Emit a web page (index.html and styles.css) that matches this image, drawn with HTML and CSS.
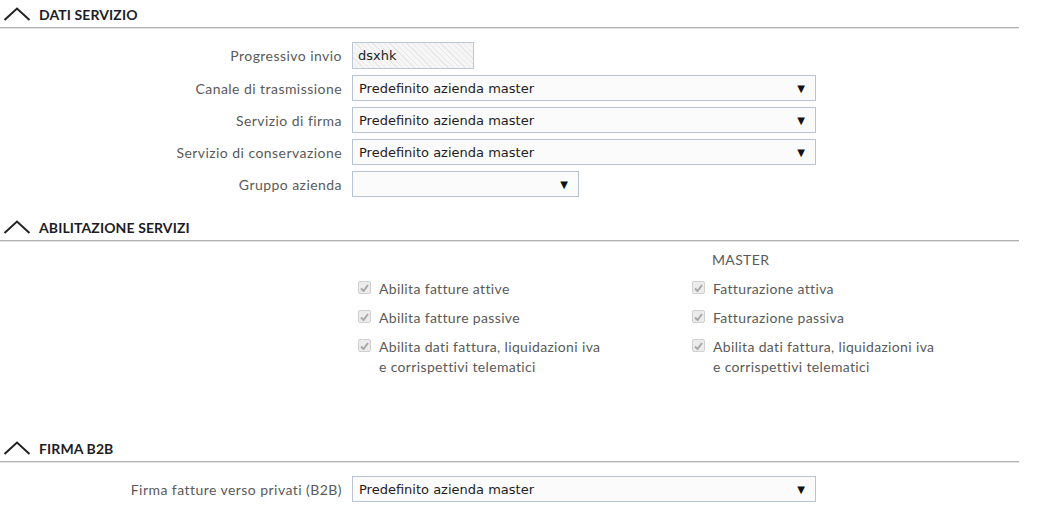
FILE: index.html
```html
<!DOCTYPE html>
<html lang="it">
<head>
<meta charset="utf-8">
<title>Dati servizio</title>
<link rel="stylesheet" href="styles.css">
</head>
<body>
<div class="page">
  <div class="section-head">
    <svg class="chev" width="28" height="14" viewBox="0 0 28 14"><polyline points="1.5,13 14,1.5 26.5,13" fill="none" stroke="#222" stroke-width="2"/></svg>
    <span class="title">DATI SERVIZIO</span>
  </div>
  <div class="form form-dati">
    <label class="lbl">Progressivo invio</label>
    <div class="ctl"><div class="input ro">dsxhk</div></div>
    <label class="lbl">Canale di trasmissione</label>
    <div class="ctl"><div class="select wide"><span>Predefinito azienda master</span><span class="arrow">▼</span></div></div>
    <label class="lbl">Servizio di firma</label>
    <div class="ctl"><div class="select wide"><span>Predefinito azienda master</span><span class="arrow">▼</span></div></div>
    <label class="lbl">Servizio di conservazione</label>
    <div class="ctl"><div class="select wide"><span>Predefinito azienda master</span><span class="arrow">▼</span></div></div>
    <label class="lbl">Gruppo azienda</label>
    <div class="ctl"><div class="select narrow"><span></span><span class="arrow">▼</span></div></div>
  </div>

  <div class="section-head sec2">
    <svg class="chev" width="28" height="14" viewBox="0 0 28 14"><polyline points="1.5,13 14,1.5 26.5,13" fill="none" stroke="#222" stroke-width="2"/></svg>
    <span class="title">ABILITAZIONE SERVIZI</span>
  </div>
  <div class="services">
    <div></div>
    <div class="master">MASTER</div>
    <div class="chk"><span class="box"><svg width="9" height="8" viewBox="0 0 9 8"><polyline points="1,4.5 3.5,7 8,1" fill="none" stroke="#a8a8a8" stroke-width="2"/></svg></span><span class="txt">Abilita fatture attive</span></div>
    <div class="chk"><span class="box"><svg width="9" height="8" viewBox="0 0 9 8"><polyline points="1,4.5 3.5,7 8,1" fill="none" stroke="#a8a8a8" stroke-width="2"/></svg></span><span class="txt">Fatturazione attiva</span></div>
    <div class="chk"><span class="box"><svg width="9" height="8" viewBox="0 0 9 8"><polyline points="1,4.5 3.5,7 8,1" fill="none" stroke="#a8a8a8" stroke-width="2"/></svg></span><span class="txt">Abilita fatture passive</span></div>
    <div class="chk"><span class="box"><svg width="9" height="8" viewBox="0 0 9 8"><polyline points="1,4.5 3.5,7 8,1" fill="none" stroke="#a8a8a8" stroke-width="2"/></svg></span><span class="txt">Fatturazione passiva</span></div>
    <div class="chk"><span class="box"><svg width="9" height="8" viewBox="0 0 9 8"><polyline points="1,4.5 3.5,7 8,1" fill="none" stroke="#a8a8a8" stroke-width="2"/></svg></span><span class="txt">Abilita dati fattura, liquidazioni iva<br>e corrispettivi telematici</span></div>
    <div class="chk"><span class="box"><svg width="9" height="8" viewBox="0 0 9 8"><polyline points="1,4.5 3.5,7 8,1" fill="none" stroke="#a8a8a8" stroke-width="2"/></svg></span><span class="txt">Abilita dati fattura, liquidazioni iva<br>e corrispettivi telematici</span></div>
  </div>

  <div class="section-head sec3">
    <svg class="chev" width="28" height="14" viewBox="0 0 28 14"><polyline points="1.5,13 14,1.5 26.5,13" fill="none" stroke="#222" stroke-width="2"/></svg>
    <span class="title">FIRMA B2B</span>
  </div>
  <div class="form form-b2b">
    <label class="lbl">Firma fatture verso privati (B2B)</label>
    <div class="ctl"><div class="select wide"><span>Predefinito azienda master</span><span class="arrow">▼</span></div></div>
  </div>
</div>
</body>
</html>
```

FILE: styles.css
```css
html, body {
  margin: 0;
  padding: 0;
  background: #ffffff;
}
body {
  font-family: "Lato", "Open Sans", sans-serif;
  color: #5a5a5a;
}
.page {
  width: 1019px;
  padding-top: 1px;
}
.section-head {
  height: 26px;
  display: flex;
  align-items: center;
  gap: 8px;
  padding-left: 3px;
  border-bottom: 1px solid #b0b0b0;
  box-shadow: 0 1px 0 #e4e4e4;
}
.chev {
  display: block;
  margin-top: -1px;
}
.title {
  font-family: "Lato", sans-serif;
  font-weight: 700;
  font-size: 14px;
  color: #1d1d26;
  letter-spacing: 0.1px;
}
.form {
  display: grid;
  grid-template-columns: 342px auto;
  column-gap: 10px;
  row-gap: 6px;
  align-items: center;
}
.form-dati {
  margin-top: 14px;
}
.form-b2b {
  margin-top: 14px;
}
.lbl {
  text-align: right;
  font-size: 14px;
  letter-spacing: 0.45px;
  color: #5a5a5a;
}
.ctl {
  display: flex;
}
.input {
  box-sizing: border-box;
  width: 122px;
  height: 27px;
  border: 1px solid #bcc6d4;
  font-family: "DejaVu Sans", Verdana, sans-serif;
  font-size: 13px;
  color: #222;
  padding-left: 5px;
  line-height: 25px;
}
.input.ro {
  background: repeating-linear-gradient(45deg, #f6f6f6 0px, #f6f6f6 3px, #e8e8e8 3px, #e8e8e8 4px);
}
.select {
  box-sizing: border-box;
  height: 26px;
  border: 1px solid #b8c4d4;
  background: #fbfbfb;
  display: flex;
  align-items: center;
  justify-content: space-between;
  padding: 0 10px 0 6px;
  font-family: "DejaVu Sans", Verdana, sans-serif;
  font-size: 13px;
  color: #241c1c;
}
.select.wide {
  width: 464px;
}
.select.narrow {
  width: 227px;
}
.arrow {
  font-size: 10px;
  color: #111;
}
.sec2 {
  margin-top: 17px;
}
.services {
  display: grid;
  grid-template-columns: 334px auto;
  margin-left: 358px;
  margin-top: 9px;
  row-gap: 9px;
  font-size: 14px;
  letter-spacing: 0.35px;
  color: #5a5a5a;
}
.master {
  padding-left: 20px;
  line-height: 20px;
}
.chk {
  display: flex;
  align-items: flex-start;
  gap: 8px;
  line-height: 20px;
}
.box {
  box-sizing: border-box;
  width: 13px;
  height: 13px;
  margin-top: 2px;
  border: 1px solid #d0d0d0;
  border-radius: 2px;
  background: #ececec;
  display: flex;
  align-items: center;
  justify-content: center;
  flex: none;
}
.box svg {
  display: block;
}
.sec3 {
  margin-top: 58px;
}
```
